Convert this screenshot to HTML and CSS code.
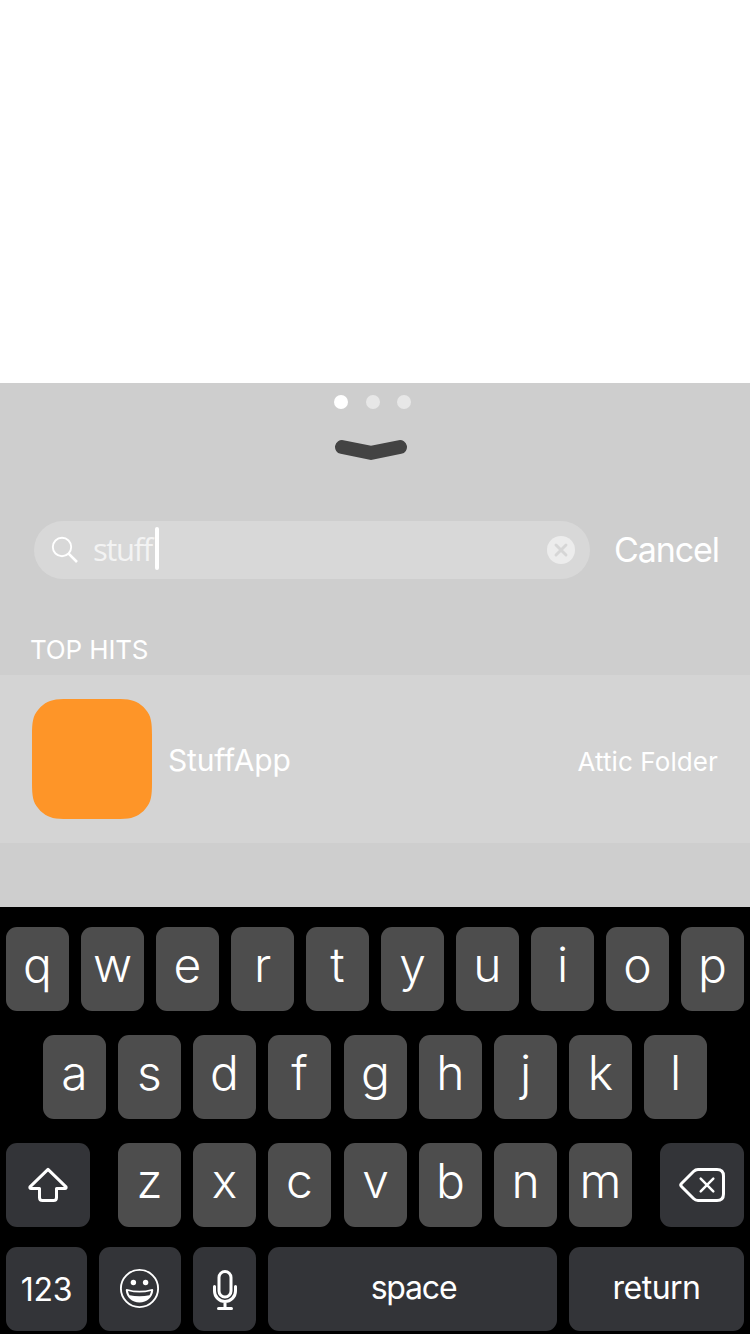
FILE: index.html
```
<!DOCTYPE html>
<html lang="en">
<head>
<meta charset="utf-8">
<title>Search</title>
<link rel="stylesheet" href="styles.css">
</head>
<body>
<main class="screen">
  <section class="panel">
    <div class="dots"><i class="dot dot-on"></i><i class="dot"></i><i class="dot"></i></div>
    <svg class="chevron" width="74" height="22" viewBox="0 0 74 22"><path d="M8 8 L37 13.8 L66 8" fill="none" stroke="#434343" stroke-width="14" stroke-linecap="round" stroke-linejoin="miter"/></svg>
    <div class="search">
      <div class="field">
        <svg class="glass" width="28" height="28" viewBox="0 0 28 28" fill="none" stroke="#fff"><circle cx="11" cy="11" r="9.2" stroke-width="1.9"/><path d="M17.6 17.6 L26 26" stroke-width="2.6"/></svg>
        <span class="query">stuff</span><span class="caret"></span>
        <svg class="clear" width="28" height="28" viewBox="0 0 28 28"><circle cx="14" cy="14" r="14" fill="#ececec"/><path d="M9 9 L19 19 M19 9 L9 19" stroke="#d6d6d6" stroke-width="2.9" stroke-linecap="round"/></svg>
      </div>
      <span class="cancel">Cancel</span>
    </div>
    <h2 class="heading">TOP HITS</h2>
    <div class="hit">
      <svg width="120" height="120" viewBox="0 0 120 120"><path d="M36 0 H84 C97 0 103 1 109 6 Q112 8 114 11 C119 17 120 23 120 36 V84 C120 97 119 103 114 109 Q112 112 109 114 C103 119 97 120 84 120 H36 C23 120 17 119 11 114 Q8 112 6 109 C1 103 0 97 0 84 V36 C0 23 1 17 6 11 Q8 8 11 6 C17 1 23 0 36 0 Z" fill="#fe9528"/></svg>
      <span class="name">StuffApp</span>
      <span class="folder">Attic Folder</span>
    </div>
  </section>
  <section class="keyboard">
    <div class="row"><b class="key">q</b><b class="key">w</b><b class="key">e</b><b class="key">r</b><b class="key">t</b><b class="key">y</b><b class="key">u</b><b class="key">i</b><b class="key">o</b><b class="key">p</b></div>
    <div class="row row-home"><b class="key">a</b><b class="key">s</b><b class="key">d</b><b class="key">f</b><b class="key wide-gap">g</b><b class="key">h</b><b class="key">j</b><b class="key">k</b><b class="key">l</b></div>
    <div class="row row-shift">
      <b class="fn shift"><svg width="84" height="84" viewBox="0 0 84 84" fill="none" stroke="#fff" stroke-width="3" stroke-linejoin="round"><path d="M42 26.3 L24 43.8 Q23.4 45.5 25 45.5 H33.5 V54.5 Q33.5 57.5 36.5 57.5 H47.5 Q50.5 57.5 50.5 54.5 V45.5 H59 Q60.6 45.5 60 43.8 Z"/></svg></b>
      <b class="key">z</b><b class="key">x</b><b class="key">c</b><b class="key wide-gap">v</b><b class="key">b</b><b class="key">n</b><b class="key">m</b>
      <b class="fn delete"><svg width="84" height="84" viewBox="0 0 84 84" fill="none" stroke="#fff" stroke-width="3" stroke-linejoin="round" stroke-linecap="round"><path d="M38 26.5 H57 Q63.5 26.5 63.5 33 V51 Q63.5 57.5 57 57.5 H38 Q35.5 57.5 33.5 55.5 L21.5 43.5 Q20 42 21.5 40.5 L33.5 28.5 Q35.5 26.5 38 26.5 Z"/><path d="M40.7 35.7 L53.3 48.3 M53.3 35.7 L40.7 48.3" stroke-width="2.5"/></svg></b>
    </div>
    <div class="row row-space">
      <b class="fn numbers">123</b>
      <b class="fn emoji"><svg width="82" height="84" viewBox="0 0 82 84"><circle cx="40.5" cy="41.5" r="18.6" fill="none" stroke="#fff" stroke-width="1.9"/><circle cx="34.4" cy="35.5" r="2.7" fill="#fff"/><circle cx="46.6" cy="35.5" r="2.7" fill="#fff"/><path d="M27.8 41.9 Q40.5 45.6 53.2 41.9 Q54.4 41.7 54.2 43.4 C53.6 50.3 48 55.4 40.5 55.4 C33 55.4 27.4 50.3 26.8 43.4 Q26.6 41.7 27.8 41.9 Z" fill="#fff"/><path d="M29 44 Q40.5 47 52 44 Q51.7 46.4 50.5 48.2 Q40.5 50.2 30.5 48.2 Q29.3 46.4 29 44 Z" fill="#333438"/></svg></b>
      <b class="fn mic"><svg width="63" height="84" viewBox="0 0 63 84" fill="none" stroke="#fff" stroke-width="3" stroke-linecap="round"><rect x="26" y="24.5" width="12" height="25.5" rx="6"/><path d="M21.5 39.5 V44 A10.5 10.5 0 0 0 42.5 44 V39.5 M32 55 V61"/><path d="M25.5 61.5 H38.5"/></svg></b>
      <b class="fn space">space</b>
      <b class="fn return">return</b>
    </div>
  </section>
</main>
</body>
</html>
```
FILE: styles.css
```
* { box-sizing: border-box; }
body { margin: 0; background: #fff; font-family: Inter, "Liberation Sans", sans-serif; color: #fff; }
.screen { width: 750px; height: 1334px; padding-top: 383px; overflow: hidden; }
.screen svg { display: block; flex: none; }

.panel { height: 524px; background: #cecece; }
.dots { display: flex; gap: 17.5px; padding: 12px 0 0 334px; }
.dot { width: 14px; height: 14px; border-radius: 50%; background: #e7e7e7; }
.dot-on { background: #fff; }
.chevron { margin: 30px 0 0 334px; }

.search { display: flex; align-items: center; height: 58px; margin: 60px 0 0 34px; }
.field { display: flex; align-items: center; width: 556px; height: 58px; padding: 0 15px 0 17px; border-radius: 29px; background: #d8d8d8; }
.query { width: 62px; margin: 0 0 2px 14px; font: 400 31px/56px "Open Sans", sans-serif; letter-spacing: -1.4px; color: #f3f3f3; font-variant-ligatures: none; }
.caret { width: 4px; height: 43px; margin: 0 0 3px 0; border-radius: 2px; background: #fff; }
.clear { margin-left: auto; }
.cancel { margin: 0 0 1px 24px; font-size: 34px; letter-spacing: -1.1px; }

.heading { margin: 55px 0 0 30px; font-size: 26px; font-weight: 400; line-height: 32px; letter-spacing: -0.15px; }
.hit { display: flex; align-items: center; height: 168px; margin-top: 9px; padding: 0 32px; background: #d4d4d4; }
.name { margin-left: 16px; padding-top: 1px; font-size: 30px; letter-spacing: -0.2px; }
.folder { margin-left: auto; padding-top: 4px; font-size: 26px; letter-spacing: 0.1px; }

.keyboard { display: flex; flex-direction: column; gap: 24px; height: 427px; padding: 20px 6px 0; background: #000; }
.row { display: flex; gap: 12px; height: 84px; flex: none; }
.row-home { padding-left: 37px; }
.row-space { margin-top: -4px; }
.key { width: 63px; height: 84px; border-radius: 11px; background: #4d4d4d; font-size: 48px; font-weight: 300; line-height: 76px; text-align: center; }
.wide-gap { margin-left: 1px; }
.fn { height: 84px; border-radius: 11px; background: #333438; font-size: 32px; font-weight: 400; line-height: 82px; text-align: center; }
.shift { width: 84px; margin-right: 16px; }
.delete { width: 84px; margin-left: 16px; }
.numbers { width: 81px; line-height: 86px; letter-spacing: -0.3px; }
.emoji { width: 82px; }
.mic { width: 63px; }
.space { width: 289px; padding-left: 2px; letter-spacing: -1.2px; }
.return { width: 175px; letter-spacing: -0.5px; }
```
